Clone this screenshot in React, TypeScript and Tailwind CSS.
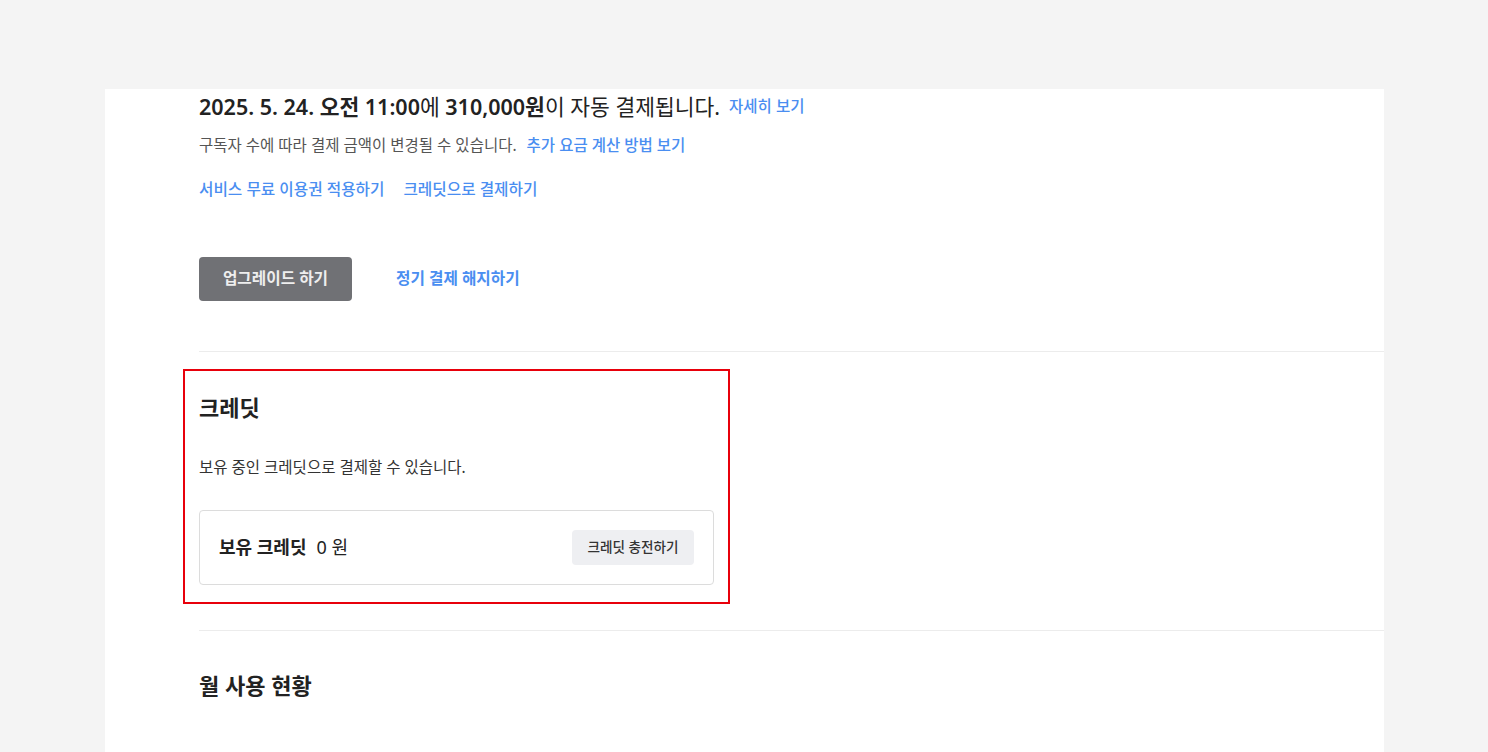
import React from "react";

const font = { fontFamily: '"Noto Sans", "Noto Sans CJK KR", sans-serif' };

const App: React.FC = () => {
    return (
        <div className="min-h-screen w-full bg-[#f4f4f4] pt-[89px]" style={font}>
            <div className="ml-[105px] w-[1279px] min-h-[663px] bg-white pl-[94px] pt-[3px]">
                {/* 결제 안내 */}
                <div className="flex items-center h-[28px] mt-[1px]">
                    <p className="text-[21.5px] leading-[28px] text-[#222]">
                        <span className="font-semibold">2025. 5. 24. 오전 11:00</span>에{" "}
                        <span className="font-semibold">310,000원</span>이 자동 결제됩니다.
                    </p>
                    <a className="ml-[9px] text-[15.5px] text-[#4a8ef1] font-medium cursor-pointer">자세히 보기</a>
                </div>
                <div className="mt-[15px] flex items-center h-[20px]">
                    <p className="text-[15.5px] text-[#555]">구독자 수에 따라 결제 금액이 변경될 수 있습니다.</p>
                    <a className="ml-[10px] text-[15.5px] text-[#4a8ef1] font-medium cursor-pointer">추가 요금 계산 방법 보기</a>
                </div>
                <div className="mt-[23px] flex items-center gap-[19px] h-[22px]">
                    <a className="text-[15.7px] text-[#4a8ef1] font-medium cursor-pointer">서비스 무료 이용권 적용하기</a>
                    <a className="text-[15.7px] text-[#4a8ef1] font-medium cursor-pointer">크레딧으로 결제하기</a>
                </div>

                <div className="mt-[56px] flex items-center gap-[44px]">
                    <button className="w-[153px] h-[44px] rounded-[4px] bg-[#707175] text-[15.7px] font-semibold text-[#eeeeee]">
                        업그레이드 하기
                    </button>
                    <a className="text-[15.7px] font-semibold text-[#4a8ef1] cursor-pointer">정기 결제 해지하기</a>
                </div>

                <div className="mt-[50px] h-px bg-[#ececec]" />

                {/* 크레딧 */}
                <div className="mt-[17px] -ml-[16px] w-[547px] border-2 border-[#e8000b] px-[14px] pt-[21px] pb-[17px]">
                    <h2 className="text-[22px] leading-[30px] font-semibold text-[#222]">크레딧</h2>
                    <p className="mt-[35px] text-[15.5px] leading-[20px] text-[#333]">보유 중인 크레딧으로 결제할 수 있습니다.</p>
                    <div className="mt-[33px] h-[75px] rounded-[4px] border border-[#dcdcdc] flex items-center justify-between pl-[19px] pr-[19px]">
                        <div className="flex items-center text-[18px] text-[#222]">
                            <span className="font-bold">보유 크레딧</span>
                            <span className="ml-[10px]">0 원</span>
                        </div>
                        <button className="w-[122px] h-[35px] rounded-[4px] bg-[#eeeff2] text-[13.6px] text-[#333] font-medium">
                            크레딧 충전하기
                        </button>
                    </div>
                </div>

                <div className="mt-[26px] h-px bg-[#ececec]" />

                <h2 className="mt-[39px] text-[22px] leading-[30px] font-semibold text-[#222]">월 사용 현황</h2>
            </div>
        </div>
    );
};

export default App;
